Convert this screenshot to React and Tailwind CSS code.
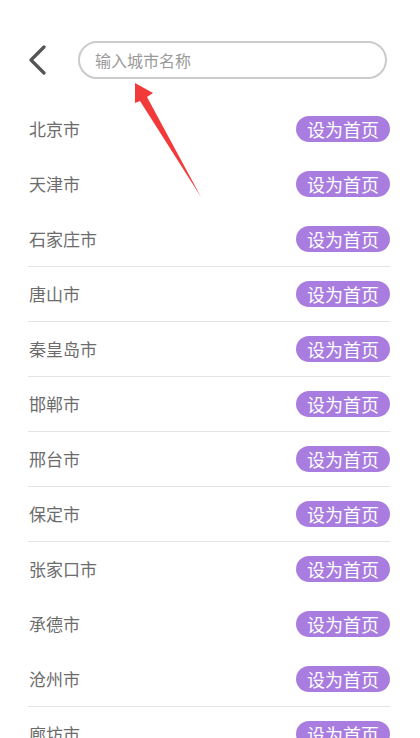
import { useState } from "react";

const cities = [
  { name: "北京市", line: false },
  { name: "天津市", line: false },
  { name: "石家庄市", line: true },
  { name: "唐山市", line: true },
  { name: "秦皇岛市", line: true },
  { name: "邯郸市", line: true },
  { name: "邢台市", line: true },
  { name: "保定市", line: true },
  { name: "张家口市", line: false },
  { name: "承德市", line: false },
  { name: "沧州市", line: true },
  { name: "廊坊市", line: false },
];

const App = () => {
  const [query, setQuery] = useState("");

  return (
    <div
      className="relative w-[420px] h-[738px] overflow-hidden bg-white"
      style={{ fontFamily: '"Noto Sans CJK SC", "Noto Sans", sans-serif' }}
    >
      <div className="flex items-center pt-[41px] pl-[26px] pr-[33px]">
        <button className="w-[22px] h-[38px] flex items-center justify-center">
          <svg width="20" height="30" viewBox="0 0 20 30" fill="none">
            <path d="M17 2 L4 15 L17 28" stroke="#555" strokeWidth="3.2" strokeLinecap="round" strokeLinejoin="round" />
          </svg>
        </button>
        <input
          type="text"
          value={query}
          onChange={(e) => setQuery(e.target.value)}
          placeholder="输入城市名称"
          className="ml-[30px] flex-1 h-[38px] rounded-full border-2 border-[#cbcbcb] px-[15px] text-[16px] text-[#555] placeholder:text-[#9a9a9a] outline-none"
        />
      </div>

      <div className="ml-[28px] mr-[30px] mt-[23px]">
        {cities.map((c) => (
          <div
            key={c.name}
            className={`flex items-center justify-between h-[55px] ${c.line ? "border-b border-[#e4e4e4]" : "border-b border-transparent"}`}
          >
            <span className="text-[17px] text-[#6c6c6c] pl-[1px]">{c.name}</span>
            <button className="h-[26px] px-[11px] rounded-full bg-[#a97ddf] text-white text-[18px] leading-[26px]">
              设为首页
            </button>
          </div>
        ))}
      </div>

      <svg className="absolute left-0 top-0 pointer-events-none" width="420" height="738">
        <polygon
          points="135,83 153,93 147,97 201,197 140,101 135,103"
          fill="#f23a3a"
        />
      </svg>
    </div>
  );
};

export default App;
